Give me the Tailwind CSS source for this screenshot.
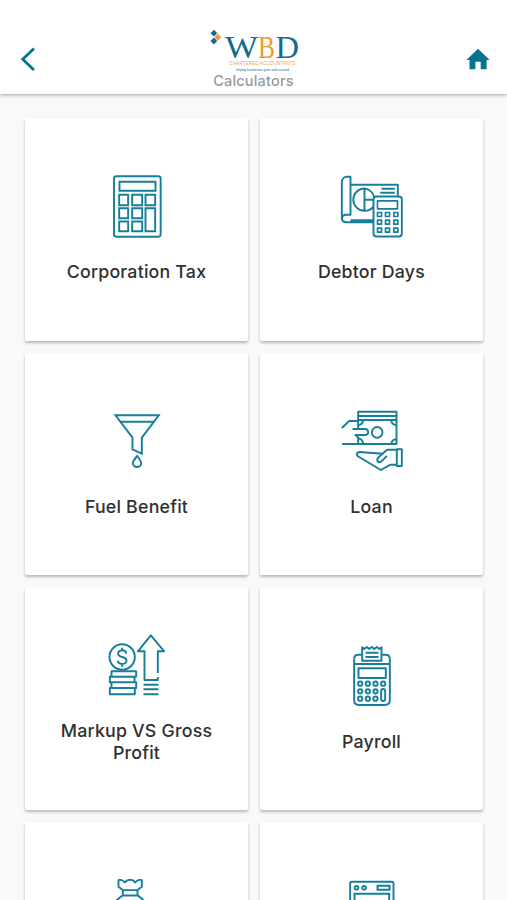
<!DOCTYPE html>
<html lang="en">
	<head>
		<meta charset="UTF-8" />
		<meta name="viewport" content="width=device-width, initial-scale=1.0" />
		<title>Calculators</title>
		<script src="https://cdn.jsdelivr.net/npm/@tailwindcss/browser@4"></script>
	</head>
	<body class="h-screen overflow-hidden bg-[#f9f9f9] font-['Inter',sans-serif] text-[#303030]">
		<!-- Header -->
		<header class="flex h-[94px] items-start justify-between bg-white shadow-[0_1px_4px_rgba(0,0,0,0.35)]">
			<a href="#" aria-label="Back" class="ml-5 mt-[47px]">
				<svg class="h-6 w-4" viewBox="0 0 16 24" fill="none" stroke="#08738f" stroke-width="2.8">
					<path d="M14 1.5 2.7 12.3 14 23" />
				</svg>
			</a>
			<div class="ml-[5px] mt-7 flex flex-col items-center">
				<!-- Logo -->
				<svg class="h-[45px] w-[92px]" viewBox="0 0 92 45">
					<g fill="#126d8c">
						<path d="m6 1.8 3.2 3.4L6 8.6 2.5 5.2zM6 9.6 9.2 13 6 16.5 2.500 13z" />
					</g>
					<path d="m9.8 5.8 3.5 3.5-3.5 3.5-3.2-3.5z" fill="#f09a32" />
					<g font-family="Liberation Serif, serif" font-size="32">
						<text x="17" y="30" textLength="33" lengthAdjust="spacingAndGlyphs" fill="#126d8c">W</text>
						<text x="50" y="30" textLength="17" lengthAdjust="spacingAndGlyphs" fill="#f09a32">B</text>
						<text x="67.5" y="30" textLength="23.5" lengthAdjust="spacingAndGlyphs" fill="#126d8c">D</text>
					</g>
					<text x="21.5" y="37" textLength="66" lengthAdjust="spacingAndGlyphs" font-family="Liberation Sans, sans-serif" font-size="5.6" fill="#f0a55c">CHARTERED ACCOUNTANTS</text>
					<text x="28" y="43" textLength="53" lengthAdjust="spacingAndGlyphs" font-family="Liberation Sans, sans-serif" font-size="3.8" fill="#126d8c">helping businesses grow and succeed</text>
				</svg>
				<h1 class="-mt-px text-[14.5px] leading-[18px] font-medium tracking-[0.2px] text-[#999999]">Calculators</h1>
			</div>
			<a href="#" aria-label="Home" class="mr-[17px] mt-12">
				<svg class="h-[22px] w-6" viewBox="0 0 24 22" fill="#08738f">
					<path d="M12 .8 23.7 12H20.6V21.2H14.7V13.8H9.4V21.2H3.5V12H.4z" />
				</svg>
			</a>
		</header>

		<!-- Calculator grid -->
		<main class="grid auto-rows-[222.7px] grid-cols-2 gap-3 pr-6 pl-[25px] pt-6 text-center text-[17.8px] leading-[22px] font-medium tracking-[0.2px]">
			<a href="#" class="flex flex-col items-center justify-center gap-[22px] rounded-xs bg-white shadow-[0_2px_3px_rgba(0,0,0,0.27)]">
				<svg class="size-16" viewBox="13.5 28.5 192 192" fill="none" stroke="#177f99" stroke-width="5.8">
					<rect x="40.5" y="32.5" width="140" height="181" rx="7" />
					<path d="M57 49H165V76H57zM56 88H83V119H56zM95 88H125V119H95zM135 88H164V119H135zM56 128H83V158H56zM95 128H125V158H95zM56 168H83V197H56zM95 168H125V197H95zM135 128H164V197H135z" />
				</svg>
				<span>Corporation Tax</span>
			</a>

			<a href="#" class="flex flex-col items-center justify-center gap-[22px] rounded-xs bg-white shadow-[0_2px_3px_rgba(0,0,0,0.27)]">
				<svg class="size-16" viewBox="28.5 28.5 192 192" fill="none" stroke="#177f99" stroke-width="5.8" stroke-linejoin="round">
					<path d="M128 170H49C39 170 34 165 34 158V49C34 40 41 34 50 34H60V148H48C39 148 34 153 34 160M60 58H202V91M60 164H128" />
					<path d="M102 69V136A33 33 0 0 1 102 69A33 33 0 0 1 131 94M102 69V136Q119 136 128 124M102 103H128M153 70H193M149 82H193" />
					<rect x="129" y="93" width="85" height="120" rx="9" />
					<path d="M141 106H201V130H141zM141 141H153V153H141zM165 141H177V153H165zM190 141H202V153H190zM141 164H153V176H141zM165 164H177V176H165zM190 164H202V176H190zM141 188H153V200H141zM165 188H177V200H165zM190 188H202V200H190z" stroke-width="5" />
				</svg>
				<span>Debtor Days</span>
			</a>

			<a href="#" class="flex flex-col items-center justify-center gap-[22px] rounded-xs bg-white shadow-[0_2px_3px_rgba(0,0,0,0.27)]">
				<svg class="size-16" viewBox="13.5 29 192 192" fill="none" stroke="#177f99" stroke-width="5.8">
					<path d="M45 45H175L124 112V160L96 147V112zM57 64H163" />
					<path d="M110 167Q97 182 97 189A12.5 11 0 0 0 122 189Q122 182 110 167z" />
				</svg>
				<span>Fuel Benefit</span>
			</a>

			<a href="#" class="flex flex-col items-center justify-center gap-[22px] rounded-xs bg-white shadow-[0_2px_3px_rgba(0,0,0,0.27)]">
				<svg class="size-16" viewBox="28.5 29 192 192" fill="none" stroke="#177f99" stroke-width="5.8" stroke-linejoin="round">
					<path d="M83 84V34H198V131H35M83 47H198M83 59H198M83 109V131" />
					<path d="M34 83 56 62H83M66 86H105Q113 88 113 96Q113 103 105 104H75L86 115Q97 117 98 131M83 75Q96 73 98 61M198 75Q184 73 182 61M198 116Q184 118 182 131" />
					<circle cx="140" cy="96" r="16" />
					<path d="M198 148H170L156 160 88 155Q80 155 79 161Q78 166 86 170L151 209 180 193H198M199 147H214V197H199zM169 167 156 180Q151 188 143 185Q138 180 142 173L156 160" />
				</svg>
				<span>Loan</span>
			</a>

			<a href="#" class="flex flex-col items-center justify-center gap-[22px] rounded-xs bg-white shadow-[0_2px_3px_rgba(0,0,0,0.27)]">
				<svg class="size-16" viewBox="13.5 25 192 192" fill="none" stroke="#177f99" stroke-width="5.8" stroke-linejoin="round">
					<circle cx="65" cy="94" r="38" />
					<path d="M77 84Q76 74 65 74Q53 75 53 84Q53 91 65 94Q78 97 78 106Q77 114 65 115Q53 114 52 105M65 66V75M65 114V123" />
					<path d="M33 137H107V153H33zM28 153H102V170H28zM33 170H107V187H33zM28 187H103V206H28z" />
					<path d="M172 142V77H191L151 29 112 77H132V163H172V154M129 177H174M129 191H174M129 206H174" />
				</svg>
				<span>Markup VS Gross<br />Profit</span>
			</a>

			<a href="#" class="flex flex-col items-center justify-center gap-[22px] rounded-xs bg-white shadow-[0_2px_3px_rgba(0,0,0,0.27)]">
				<svg class="size-16" viewBox="13.5 28 192 192" fill="none" stroke="#177f99" stroke-width="5.8" stroke-linejoin="round">
					<path d="M80 57H69Q56 57 56 70V194Q56 208 70 208H148Q163 208 163 194V70Q163 57 150 57H138" />
					<path d="M80 75V35L86 40 94 34 101 40 109 34 116 40 124 34 131 40 138 35V75zM90 51H129M90 64H129M57 85H162M69 98H151V127H69z" />
					<circle cx="74" cy="144" r="6.5" />
					<circle cx="97" cy="144" r="6.5" />
					<circle cx="120" cy="144" r="6.5" />
					<circle cx="143" cy="144" r="6.5" />
					<circle cx="74" cy="167" r="6.5" />
					<circle cx="97" cy="167" r="6.5" />
					<circle cx="120" cy="167" r="6.5" />
					<circle cx="74" cy="189" r="6.5" />
					<circle cx="97" cy="189" r="6.5" />
					<circle cx="120" cy="189" r="6.5" />
					<rect x="137" y="160" width="12" height="36" rx="6" />
				</svg>
				<span>Payroll</span>
			</a>

			<!-- Last row runs past the bottom of the screen -->
			<a href="#" class="flex flex-col items-center rounded-xs bg-white pt-[57px] shadow-[0_2px_3px_rgba(0,0,0,0.27)]">
				<svg class="size-16" viewBox="13.5 236.7 192 192" fill="none" stroke="#177f99" stroke-width="5.8" stroke-linejoin="round">
					<path d="M67 270 54 260V240Q64 237 73 247Q79 239 89 239Q99 239 104 247Q113 237 124 240V260L111 270zM67 270V286H111V270M67 286Q30 310 24 350Q20 400 45 410H133Q158 400 154 350Q148 310 111 286" />
				</svg>
			</a>

			<a href="#" class="flex flex-col items-center rounded-xs bg-white pt-[57px] shadow-[0_2px_3px_rgba(0,0,0,0.27)]">
				<svg class="size-16" viewBox="718.5 236.7 192 192" fill="none" stroke="#177f99" stroke-width="5.8">
					<rect x="749" y="245" width="130" height="178" rx="5" />
					<circle cx="768" cy="263" r="5.5" />
					<circle cx="791" cy="263" r="5.5" />
					<path d="M831 257H867V269H831zM762 281H866V400H762z" />
				</svg>
			</a>
		</main>
	</body>
</html>
